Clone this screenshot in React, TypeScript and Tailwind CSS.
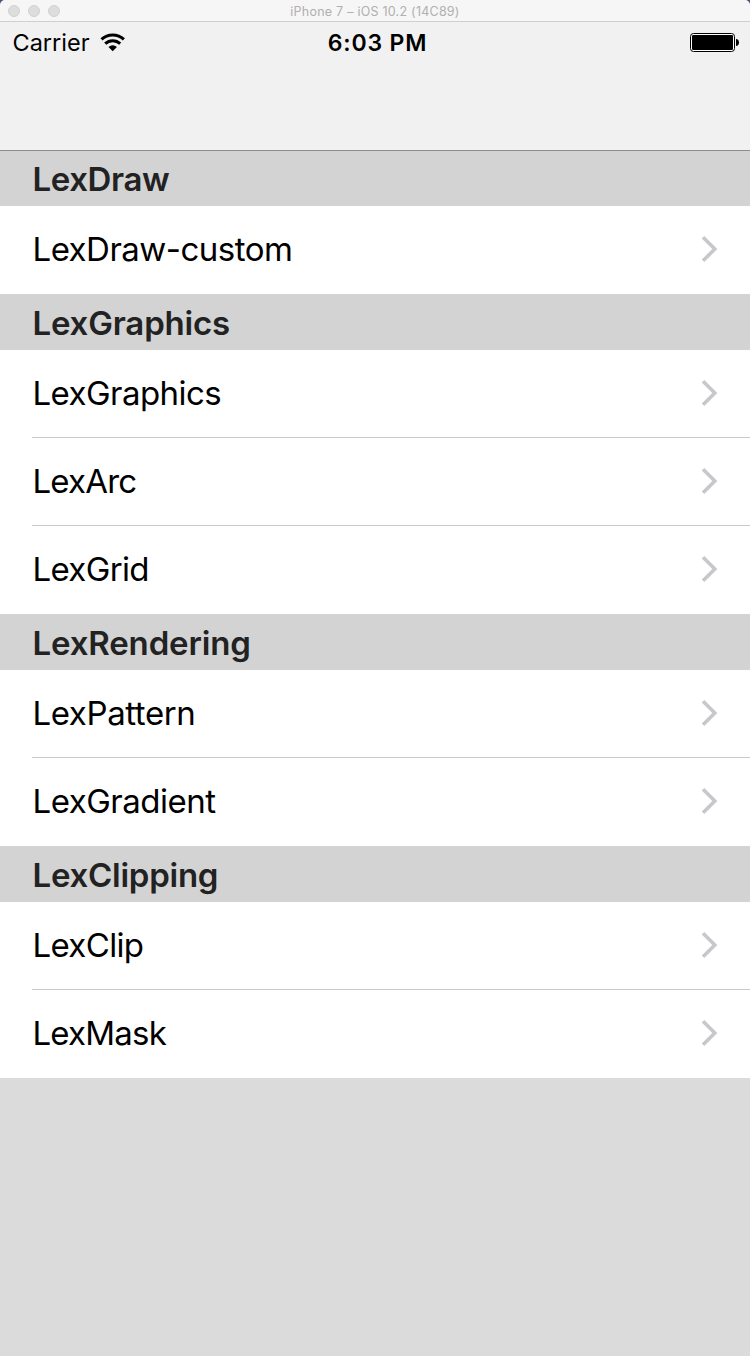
type Row = { label: string; tracking: string };
type Section = { title: string; tracking: string; rows: Row[] };

const sections: Section[] = [
  {
    title: 'LexDraw',
    tracking: 'tracking-[-0.4px]',
    rows: [{ label: 'LexDraw-custom', tracking: 'tracking-[-0.52px]' }],
  },
  {
    title: 'LexGraphics',
    tracking: 'tracking-[-0.18px]',
    rows: [
      { label: 'LexGraphics', tracking: 'tracking-[-0.55px]' },
      { label: 'LexArc', tracking: 'tracking-[-0.8px]' },
      { label: 'LexGrid', tracking: 'tracking-[-0.65px]' },
    ],
  },
  {
    title: 'LexRendering',
    tracking: 'tracking-[-0.15px]',
    rows: [
      { label: 'LexPattern', tracking: 'tracking-[-0.4px]' },
      { label: 'LexGradient', tracking: 'tracking-[-0.5px]' },
    ],
  },
  {
    title: 'LexClipping',
    tracking: 'tracking-[-0.25px]',
    rows: [
      { label: 'LexClip', tracking: 'tracking-[-0.65px]' },
      { label: 'LexMask', tracking: 'tracking-[-0.8px]' },
    ],
  },
];

function Chevron() {
  return (
    <svg width="18" height="28" viewBox="0 0 18 28" fill="none" className="mb-0.5 shrink-0">
      <path d="M3 2.2 L14.8 14 L3 25.8" stroke="#c7c7cc" strokeWidth="3.6" />
    </svg>
  );
}

function WifiIcon() {
  return (
    <svg width="26" height="20" viewBox="0 0 26 20" fill="none" stroke="#000">
      <path d="M1.5 6.4 A16.5 16.5 0 0 1 23.9 6.4" strokeWidth="3.1" />
      <path d="M5.2 10.6 A11 11 0 0 1 20.2 10.6" strokeWidth="3" />
      <path d="M8.5 14 A6 6 0 0 1 16.9 14 L12.7 18.2 Z" fill="#000" stroke="none" />
    </svg>
  );
}

function BatteryIcon() {
  return (
    <svg width="50" height="20" viewBox="0 0 50 20">
      <rect x="0.5" y="0.5" width="44" height="18" rx="3" fill="#fff" stroke="#000" />
      <rect x="2" y="2" width="41" height="15" rx="1.2" fill="#000" />
      <path d="M46 6 C48 6.2 49 7.5 49 9.5 C49 11.5 48 12.8 46 13 Z" fill="#000" />
    </svg>
  );
}

function TitleBar() {
  return (
    <header className="grid h-[22px] grid-cols-[1fr_auto_1fr] items-center rounded-t-[5px] border-b border-[#cfcfcf] bg-[#f6f6f6]">
      <div className="flex gap-2 pl-2">
        <span className="size-3 rounded-full border border-[#d0d0d0] bg-[#dddddd]" />
        <span className="size-3 rounded-full border border-[#d0d0d0] bg-[#dddddd]" />
        <span className="size-3 rounded-full border border-[#d0d0d0] bg-[#dddddd]" />
      </div>
      <h1 className="pt-px text-[12.5px] leading-[21px] tracking-[0.24px] text-[#b0b0b0]">
        iPhone 7 – iOS 10.2 (14C89)
      </h1>
      <div />
    </header>
  );
}

function StatusBar() {
  return (
    <div className="grid h-[42px] grid-cols-[1fr_auto_1fr] items-center text-black">
      <div className="flex items-center gap-2.5 pl-[12.5px]">
        <span className="text-[23.5px] leading-10">Carrier</span>
        <WifiIcon />
      </div>
      <span className="pl-[5px] text-[23px] leading-10 font-semibold tracking-[0.8px]">6:03 PM</span>
      <div className="flex justify-end pr-2.5">
        <BatteryIcon />
      </div>
    </div>
  );
}

export default function App() {
  return (
    <div className="bg-[#3f5573] font-['Inter',sans-serif]">
      <div className="flex h-[1356px] w-[750px] flex-col overflow-hidden rounded-t-[5px] bg-[#dbdbdb]">
        <TitleBar />
        <div className="h-[129px] shrink-0 border-b border-[#8e8e8e] bg-[#f1f1f1]">
          <StatusBar />
        </div>
        <main>
          {sections.map((section, i) => (
            <section key={section.title}>
              <h2
                className={`${i === 0 ? 'h-[55px] leading-[56px]' : 'h-14 leading-[58px]'} bg-[#d3d3d3] pl-[32.5px] text-[33px] font-semibold text-[#222] ${section.tracking}`}
              >
                {section.title}
              </h2>
              <ul className="bg-white">
                {section.rows.map((row, j) => (
                  <li key={row.label} className="flex h-22 pl-8">
                    <div
                      className={`flex flex-1 items-center justify-between pr-8 pl-[0.5px] ${j < section.rows.length - 1 ? 'border-b border-[#c8c7cc]' : 'pb-px'}`}
                    >
                      <span className={`text-[33px] leading-[87px] text-black ${row.tracking}`}>
                        {row.label}
                      </span>
                      <Chevron />
                    </div>
                  </li>
                ))}
              </ul>
            </section>
          ))}
        </main>
      </div>
    </div>
  );
}
